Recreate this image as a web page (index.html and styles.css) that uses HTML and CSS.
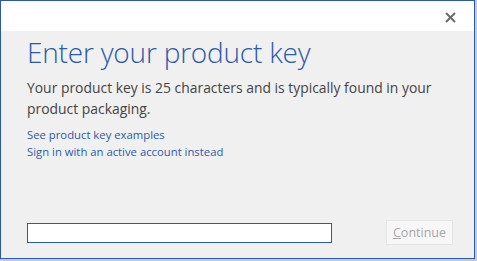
FILE: index.html
```html
<!DOCTYPE html>
<html lang="en">
<head>
    <meta charset="UTF-8">
    <title>Enter your product key</title>
    <link rel="stylesheet" href="styles.css">
</head>
<body>
    <div class="dialog">
        <div class="titlebar">
            <button class="close" title="Close">
                <svg width="11" height="11" viewBox="0 0 11 11"><path d="M1 1L10 10M10 1L1 10" stroke="#6b6b6b" stroke-width="2"/></svg>
            </button>
        </div>
        <div class="content">
            <h1>Enter your product key</h1>
            <p class="info">Your product key is 25 characters and is typically found in your product packaging.</p>
            <div class="links">
                <a href="#">See product key examples</a>
                <a href="#">Sign in with an active account instead</a>
            </div>
            <div class="actions">
                <input type="text" class="key-input">
                <button class="continue" disabled><u>C</u>ontinue</button>
            </div>
        </div>
    </div>
</body>
</html>
```
FILE: styles.css
```css
body {
    margin: 0;
    background-color: #c8c8c8;
    font-family: "Open Sans", "Noto Sans", sans-serif;
}

.dialog {
    width: 473px;
    height: 257px;
    border: 1px solid #2b5ba8;
    background-color: #f0f0f0;
    display: flex;
    flex-direction: column;
}

.titlebar {
    height: 30px;
    background-color: #fff;
    display: flex;
    justify-content: flex-end;
    align-items: flex-start;
}

.close {
    border: none;
    background: none;
    padding: 0;
    margin: 11px 18px 0 0;
    width: 11px;
    height: 11px;
    display: flex;
}

.content {
    flex-grow: 1;
    padding: 0 0 0 26px;
    display: flex;
    flex-direction: column;
}

h1 {
    margin: 3px 0 0 0;
    font-weight: 300;
    font-size: 28px;
    line-height: 36px;
    color: #2b5ba8;
    letter-spacing: -0.2px;
}

.info {
    margin: 7px 0 0 0;
    font-size: 13.9px;
    line-height: 21px;
    color: #444;
    width: 420px;
}

.links {
    margin-top: 7px;
    display: flex;
    flex-direction: column;
}

.links a {
    font-size: 11.3px;
    line-height: 17px;
    color: #2b5ba8;
    text-decoration: none;
}

.actions {
    margin-top: auto;
    margin-bottom: 13px;
    display: flex;
    align-items: center;
}

.key-input {
    width: 301px;
    height: 16px;
    border: 1px solid #2b5ba8;
    padding: 1px;
    background: #fff;
    margin-right: 54px;
}

.continue {
    width: 67px;
    height: 25px;
    border: 1px solid #e4e4e4;
    background-color: #f7f7f7;
    color: #a8a8a8;
    font-family: "Open Sans", "Noto Sans", sans-serif;
    font-size: 12.5px;
    padding: 0;
}

.continue u {
    text-decoration-color: #a8a8a8;
}
```
